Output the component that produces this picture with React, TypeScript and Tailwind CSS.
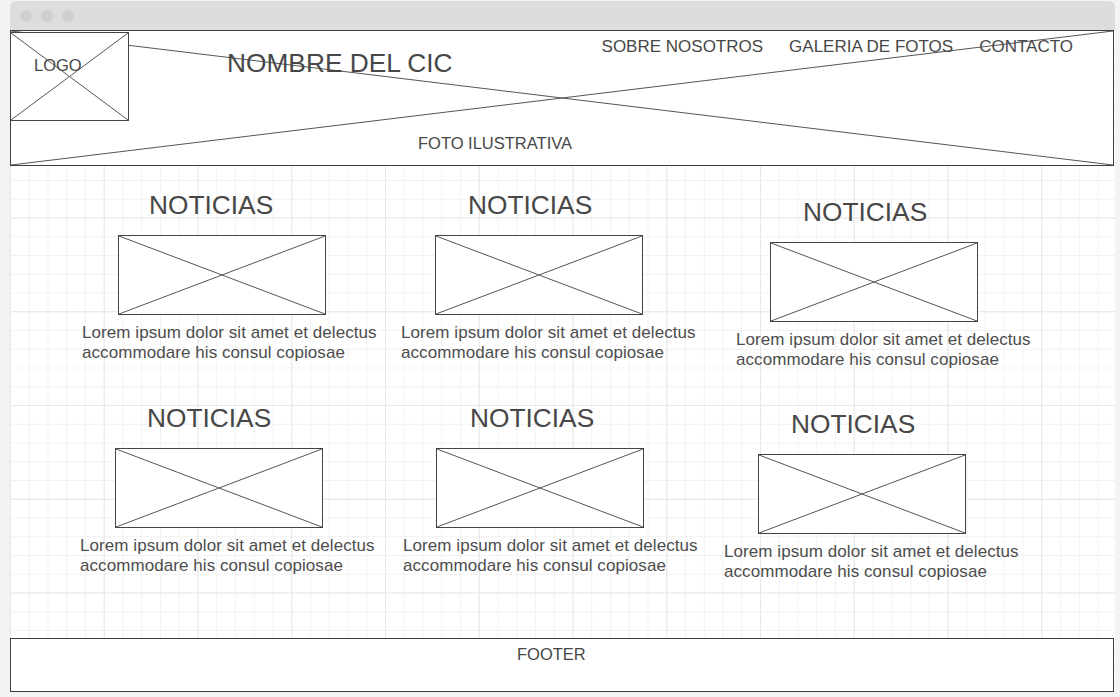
import React from "react";

type Card = { wrap: string; box: string };

const ROW_ONE: Card[] = [
  { wrap: "ml-[72px]", box: "ml-[36px]" },
  { wrap: "ml-[19px]", box: "ml-[34px]" },
  { wrap: "ml-[35px] mt-[7px]", box: "ml-[34px]" },
];

const ROW_TWO: Card[] = [
  { wrap: "ml-[70px]", box: "ml-[35px]" },
  { wrap: "ml-[23px]", box: "ml-[33px]" },
  { wrap: "ml-[21px] mt-[6px]", box: "ml-[34px]" },
];

// placeholder cross, stretched to whatever box it sits in
function Cross() {
  return (
    <svg
      className="pointer-events-none absolute inset-0 h-full w-full"
      viewBox="0 0 100 100"
      preserveAspectRatio="none"
    >
      <line x1="0" y1="0" x2="100" y2="100" stroke="#555" strokeWidth="1" vectorEffect="non-scaling-stroke" />
      <line x1="0" y1="100" x2="100" y2="0" stroke="#555" strokeWidth="1" vectorEffect="non-scaling-stroke" />
    </svg>
  );
}

function NewsCard({ card }: { card: Card }) {
  return (
    <div className={`flex w-[300px] shrink-0 flex-col ${card.wrap}`}>
      <h2 className="ml-[67px] text-[26.3px] leading-[30px] font-normal">NOTICIAS</h2>
      <div className={`relative mt-[15px] h-[80px] w-[208px] border border-[#444] bg-white ${card.box}`}>
        <Cross />
      </div>
      <p className="mt-[8px] whitespace-nowrap text-[17px] leading-[20px] tracking-[0.07px] text-[#4d4d4d]">
        Lorem ipsum dolor sit amet et delectus
        <br />
        accommodare his consul copiosae
      </p>
    </div>
  );
}

export default function App() {
  return (
    <div className="h-[697px] w-[1120px] overflow-hidden bg-[#f3f3f3] pl-[10px] pr-[5px] font-['Liberation_Sans',Arial,sans-serif] text-[#474747]">
      <div className="flex h-[692px] w-[1105px] flex-col">
        {/* window chrome */}
        <div className="mt-px flex h-[29px] items-center gap-[9px] rounded-t-[6px] bg-[#dddddd] pl-[10px]">
          <span className="h-[12px] w-[12px] rounded-full bg-[#cfcfcf]" />
          <span className="h-[12px] w-[12px] rounded-full bg-[#cfcfcf]" />
          <span className="h-[12px] w-[12px] rounded-full bg-[#cfcfcf]" />
        </div>

        <div className="flex flex-1 flex-col bg-white [background-image:linear-gradient(to_right,#e8e8e8_1px,transparent_1px),linear-gradient(to_bottom,#e8e8e8_1px,transparent_1px),linear-gradient(to_right,#f2f2f2_1px,transparent_1px),linear-gradient(to_bottom,#f2f2f2_1px,transparent_1px)] [background-size:93.75px_93.75px,93.75px_93.75px,18.75px_18.75px,18.75px_18.75px]">
          {/* header with illustrative photo */}
          <header className="relative mr-px h-[136px] border border-[#3f3f3f] bg-white">
            <Cross />
            <div className="relative flex items-start">
              <div className="relative -ml-px mt-px h-[89px] w-[119px] border border-[#444] bg-white pl-[23px] pt-[21px]">
                <Cross />
                <span className="relative text-[16.5px] leading-[20px]">LOGO</span>
              </div>
              <h1 className="ml-[98px] mt-[17px] text-[26.3px] leading-[30px] font-normal">NOMBRE DEL CIC</h1>
              <nav className="ml-auto mr-[40px] mt-[6px] flex gap-[26px] text-[17px] leading-[20px]">
                <span>SOBRE NOSOTROS</span>
                <span>GALERIA DE FOTOS</span>
                <span>CONTACTO</span>
              </nav>
            </div>
            <p className="relative ml-[407px] mt-[12px] text-[16.5px] leading-[20px]">FOTO ILUSTRATIVA</p>
          </header>

          {/* news */}
          <main className="flex-1 pt-[24px]">
            <div className="flex items-start">
              {ROW_ONE.map((c, i) => (
                <NewsCard key={i} card={c} />
              ))}
            </div>
            <div className="mt-[33px] flex items-start">
              {ROW_TWO.map((c, i) => (
                <NewsCard key={i} card={c} />
              ))}
            </div>
          </main>

          <footer className="mr-px h-[54px] border border-[#3f3f3f] bg-white pl-[506px] pt-[5px] text-[16.5px] leading-[20px]">
            FOOTER
          </footer>
        </div>
      </div>
    </div>
  );
}
